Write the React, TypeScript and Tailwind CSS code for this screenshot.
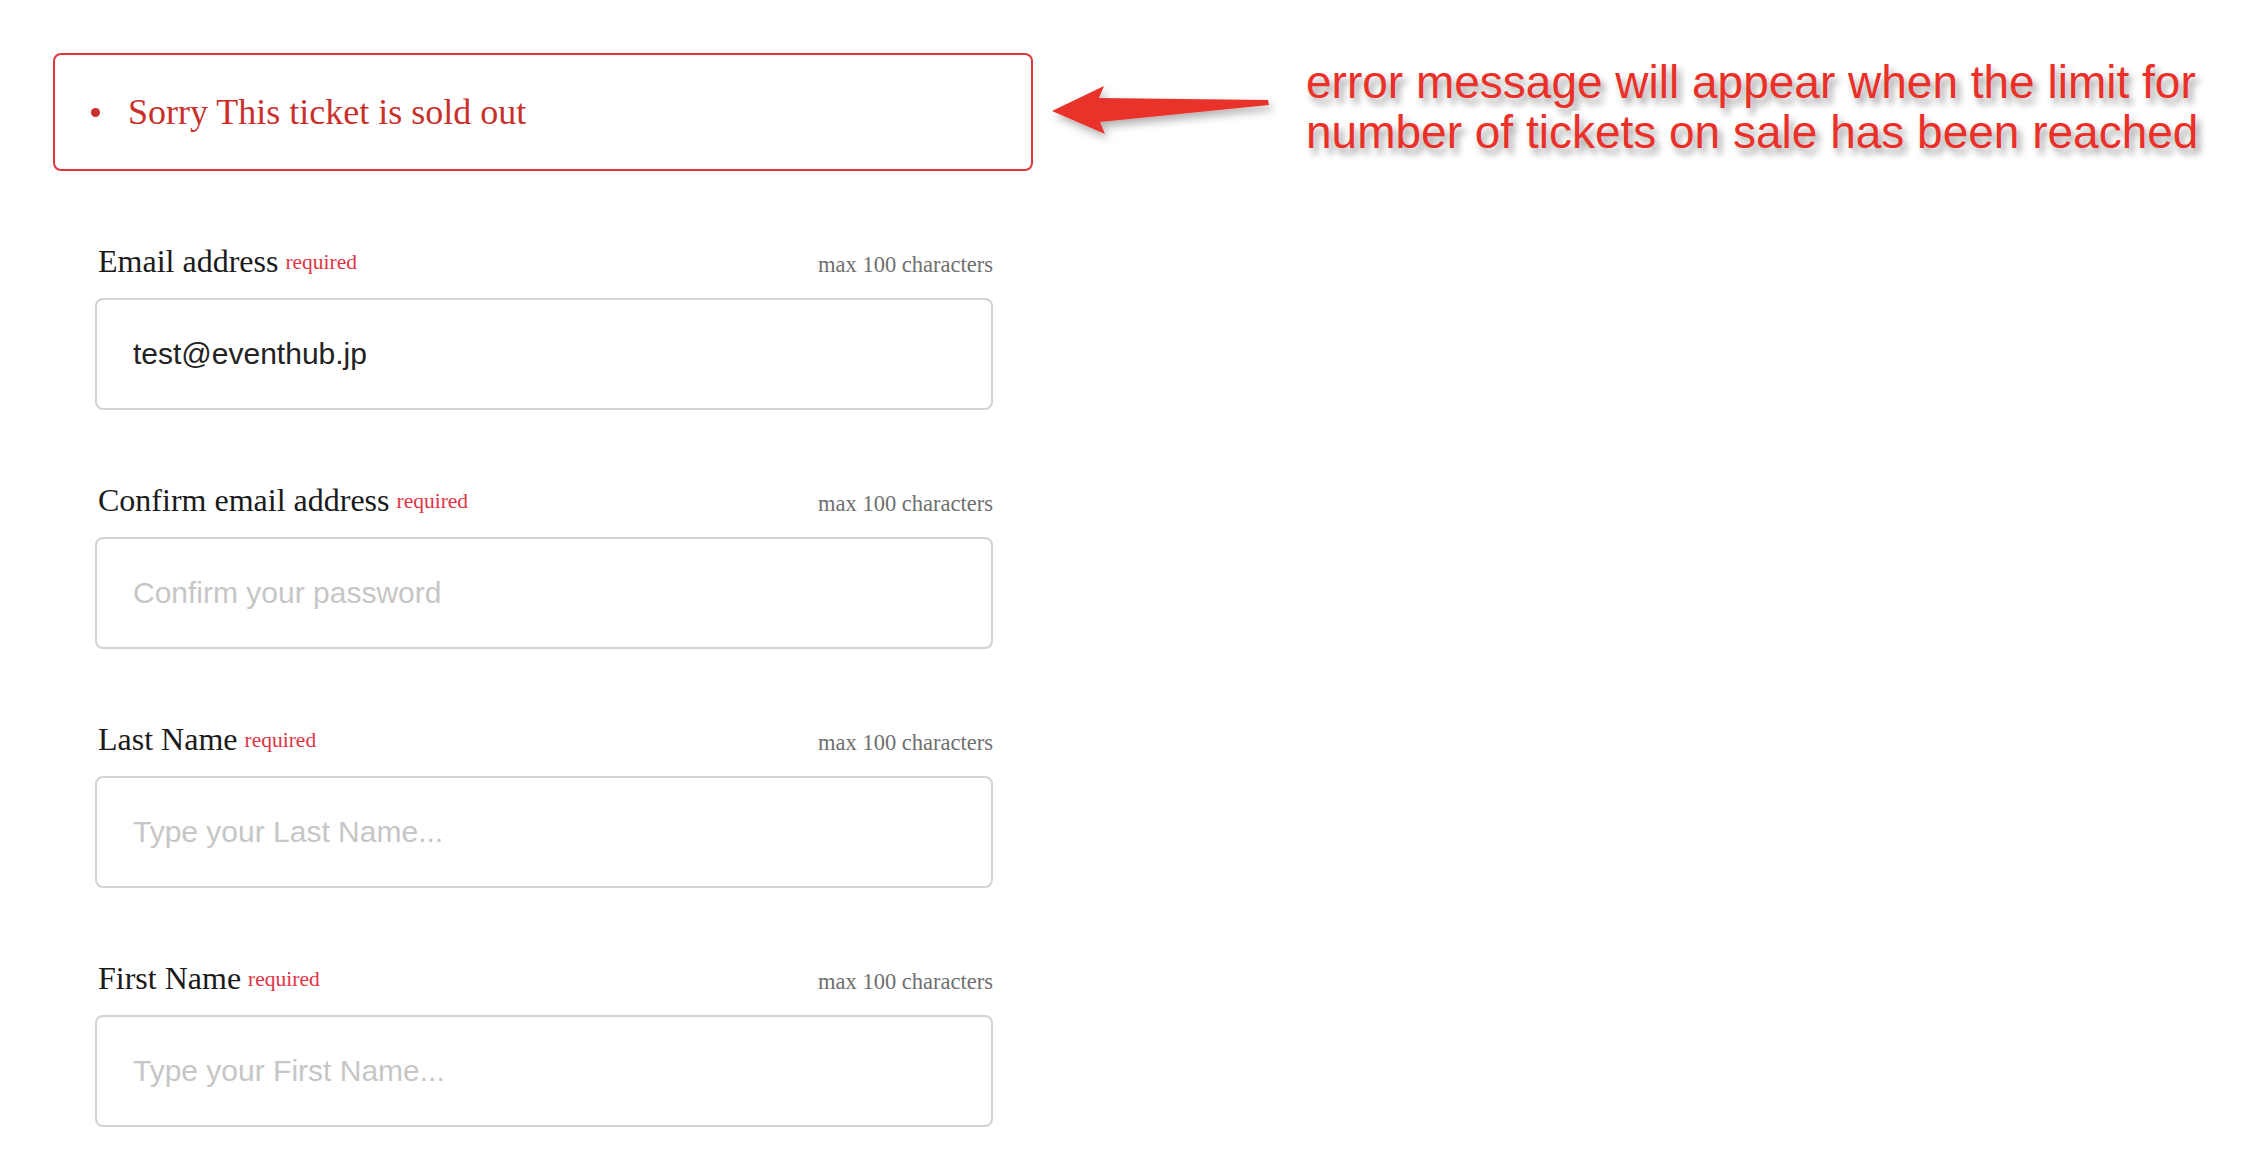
import React from 'react';

const serif = "font-['Liberation_Serif','Times_New_Roman',serif]";
const sans = "font-['Liberation_Sans',Arial,sans-serif]";

const fields = [
  { label: 'Email address', value: 'test@eventhub.jp', placeholder: '' },
  { label: 'Confirm email address', value: '', placeholder: 'Confirm your password' },
  { label: 'Last Name', value: '', placeholder: 'Type your Last Name...' },
  { label: 'First Name', value: '', placeholder: 'Type your First Name...' },
];

function Arrow() {
  return (
    <svg width="232" height="64" viewBox="0 0 232 64" className="shrink-0 ml-[14px]">
      <defs>
        <filter id="arrowShadow" x="-10%" y="-40%" width="130%" height="200%">
          <feDropShadow dx="3" dy="5" stdDeviation="4" floodColor="#000" floodOpacity="0.3" />
        </filter>
      </defs>
      <polygon
        points="5,31 57,6 52,18 221,20 222,25 53,42 58,54"
        fill="#e8322a"
        filter="url(#arrowShadow)"
      />
    </svg>
  );
}

function Field({ label, value, placeholder }: { label: string; value: string; placeholder: string }) {
  return (
    <div className="mb-[72px]">
      <div className="flex items-baseline justify-between pl-[3px] h-[36px]">
        <div className="flex items-baseline">
          <span className={`${serif} text-[32px] leading-[36px] text-[#1a1a1a]`}>{label}</span>
          <span className={`${serif} text-[21.5px] ml-[7px] text-[#e03444] relative -top-[3px]`}>required</span>
        </div>
        <span className={`${serif} text-[22.5px] text-[#6f6f6f]`}>max 100 characters</span>
      </div>
      <input
        type="text"
        defaultValue={value}
        placeholder={placeholder}
        className={`${sans} mt-[19px] block w-full h-[112px] px-[36px] text-[30px] text-[#222] placeholder:text-[#c6c6c6] border-2 border-[#d3d3d3] rounded-[8px] outline-none`}
      />
    </div>
  );
}

export default function App() {
  return (
    <div className="min-h-screen bg-white pl-[53px] pt-[53px]">
      <div className="flex items-center">
        <div className="w-[980px] h-[118px] shrink-0 border-2 border-[#dc3a3a] rounded-[8px] flex items-center">
          <ul className="flex items-center">
            <li className="flex items-center">
              <span className="ml-[36px] w-[9px] h-[9px] rounded-full bg-[#cc2f2f]" />
              <span className={`${serif} ml-[28px] text-[36px] text-[#c9302c]`}>Sorry This ticket is sold out</span>
            </li>
          </ul>
        </div>
        <Arrow />
        <p
          className={`${sans} ml-[27px] mb-[10px] whitespace-nowrap text-[46px] leading-[50px] text-[#ea3029] [-webkit-text-stroke:6px_white] [paint-order:stroke_fill] [text-shadow:4px_6px_7px_rgba(0,0,0,0.4)]`}
        >
          error message will appear when the limit for
          <br />
          number of tickets on sale has been reached
        </p>
      </div>

      <form className="ml-[42px] w-[898px] mt-[72px]">
        {fields.map((f) => (
          <Field key={f.label} {...f} />
        ))}
      </form>
    </div>
  );
}
